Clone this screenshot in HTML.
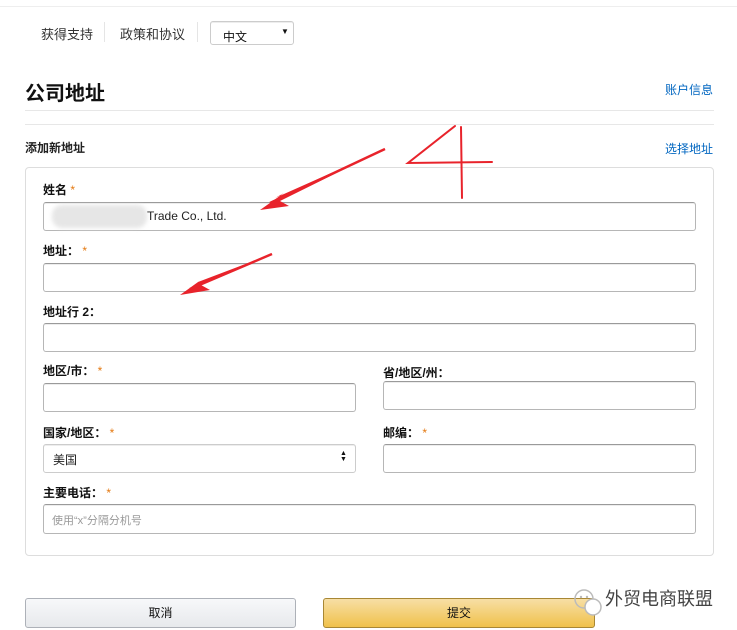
<!DOCTYPE html>
<html><head><meta charset="utf-8"><style>
*{margin:0;padding:0;box-sizing:border-box}
body{width:737px;height:630px;background:#fff;position:relative;overflow:hidden;font-family:"Liberation Sans","Noto Sans CJK SC",sans-serif;color:#111;font-size:12px}
.a{position:absolute;white-space:nowrap}
.inp{position:absolute;border:1px solid #b6b6b6;border-top-color:#9a9a9a;border-radius:3px;background:#fff;box-shadow:0 1px 0 rgba(255,255,255,.5),inset 0 1px 0 rgba(0,0,0,.07)}
.lb{position:absolute;font-weight:bold;font-size:12px;color:#111}
.st{color:#e47911;font-weight:normal}
.lk{color:#0066c0;font-size:12px}
</style></head><body>
<div class="a" style="left:0;top:6px;width:737px;height:1px;background:#eee"></div>
<div class="a" style="left:41px;top:24px;font-size:13px;color:#333">获得支持</div>
<div class="a" style="left:104px;top:22px;width:1px;height:20px;background:#e5e5e5"></div>
<div class="a" style="left:120px;top:24px;font-size:13px;color:#333">政策和协议</div>
<div class="a" style="left:197px;top:22px;width:1px;height:20px;background:#e5e5e5"></div>
<div class="inp" style="left:210px;top:21px;width:84px;height:24px;border-color:#ccc"></div>
<div class="a" style="left:223px;top:28px;font-size:12px">中文</div>
<div class="a" style="left:281px;top:27px;font-size:8px">▼</div>
<div class="a" style="left:25px;top:77px;font-size:20px;font-weight:bold">公司地址</div>
<div class="a lk" style="left:665px;top:81px">账户信息</div>
<div class="a" style="left:25px;top:110px;width:689px;height:1px;background:#e7e7e7"></div>
<div class="a" style="left:25px;top:124px;width:689px;height:1px;background:#e7e7e7"></div>
<div class="a" style="left:25px;top:139px;font-size:12px;font-weight:bold;color:#222">添加新地址</div>
<div class="a lk" style="left:665px;top:140px">选择地址</div>
<div class="a" style="left:25px;top:167px;width:689px;height:389px;border:1px solid #ddd;border-radius:4px"></div>

<div class="lb" style="left:43px;top:181px">姓名 <span class="st">*</span></div>
<div class="inp" style="left:43px;top:202px;width:653px;height:29px"></div>
<div class="a" style="left:52px;top:205px;width:95px;height:23px;background:#e6e6e6;border-radius:10px;filter:blur(2px)"></div>
<div class="a" style="left:147px;top:209px;font-size:12px;color:#222">Trade Co., Ltd.</div>

<div class="lb" style="left:43px;top:242px">地址： <span class="st">*</span></div>
<div class="inp" style="left:43px;top:263px;width:653px;height:29px"></div>
<div class="lb" style="left:43px;top:303px">地址行 2：</div>
<div class="inp" style="left:43px;top:323px;width:653px;height:29px"></div>

<div class="lb" style="left:43px;top:362px">地区/市： <span class="st">*</span></div>
<div class="inp" style="left:43px;top:383px;width:313px;height:29px"></div>
<div class="lb" style="left:383px;top:364px">省/地区/州：</div>
<div class="inp" style="left:383px;top:381px;width:313px;height:29px"></div>

<div class="lb" style="left:43px;top:424px">国家/地区： <span class="st">*</span></div>
<div class="inp" style="left:43px;top:444px;width:313px;height:29px;border-color:#ccc"></div>
<div class="a" style="left:53px;top:451px;font-size:12px;color:#222">美国</div>
<div class="a" style="left:340px;top:451px;font-size:7px;line-height:6px;text-align:center">▲<br>▼</div>
<div class="lb" style="left:383px;top:424px">邮编： <span class="st">*</span></div>
<div class="inp" style="left:383px;top:444px;width:313px;height:29px"></div>

<div class="lb" style="left:43px;top:484px">主要电话： <span class="st">*</span></div>
<div class="inp" style="left:43px;top:504px;width:653px;height:30px"></div>
<div class="a" style="left:52px;top:512px;font-size:11px;color:#999">使用“x”分隔分机号</div>

<div class="a" style="left:25px;top:598px;width:271px;height:30px;border:1px solid #adb1b8;border-radius:3px;background:linear-gradient(#f7f8fa,#e7e9ec);text-align:center;line-height:28px;font-size:12px">取消</div>
<div class="a" style="left:323px;top:598px;width:272px;height:30px;border:1px solid #a88734;border-radius:3px;background:linear-gradient(#f7dfa5,#f0c14b);text-align:center;line-height:28px;font-size:12px">提交</div>

<svg class="a" style="left:570px;top:585px" width="40" height="40" viewBox="0 0 40 40"><circle cx="14" cy="14" r="9" fill="none" stroke="#bbb" stroke-width="1.5"/><circle cx="23" cy="22" r="8" fill="#fff" stroke="#bbb" stroke-width="1.5"/><circle cx="11" cy="12" r="1.2" fill="#bbb"/><circle cx="17" cy="12" r="1.2" fill="#bbb"/></svg>
<div class="a" style="left:605px;top:585px;font-size:18px;color:#444">外贸电商联盟</div>

<svg class="a" style="left:0;top:0" width="737" height="630" viewBox="0 0 737 630">
<g fill="none" stroke="#e8232b" stroke-width="2" stroke-linecap="round">
<path d="M455 126 L408 163 L492 162"/><path d="M461 127 L462 198"/>
</g>
<path d="M385 149 L275 198 L284 193 L260 210 L289 206 L280 201 Z" fill="#e8232b"/>
<path d="M272 254 L198 282 L205 277 L180 295 L210 290 L201 285 Z" fill="#e8232b"/>
<path d="M385 149 L270 203" stroke="#e8232b" stroke-width="2.5"/>
<path d="M272 254 L190 289" stroke="#e8232b" stroke-width="2.5"/>
</svg>
</body></html>
